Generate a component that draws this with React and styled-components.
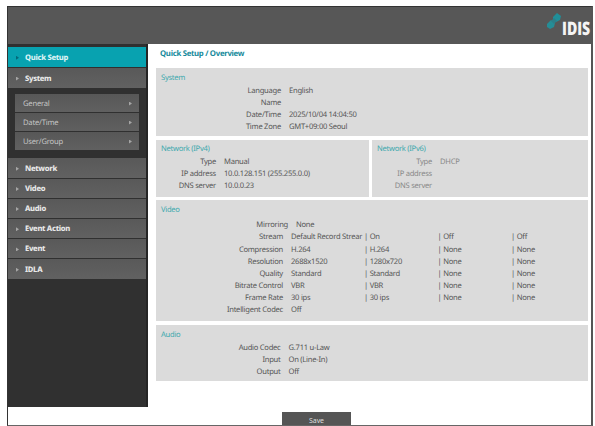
import styled, { createGlobalStyle } from "styled-components";

const menuBefore = [
  { name: "Quick Setup", active: true },
  { name: "System" },
];
const subMenu = ["General", "Date/Time", "User/Group"];
const menuAfter = ["Network", "Video", "Audio", "Event Action", "Event", "IDLA"];

const systemRows = [
  ["Language", "English"],
  ["Name", ""],
  ["Date/Time", "2025/10/04 14:04:50"],
  ["Time Zone", "GMT+09:00 Seoul"],
];
const ipv4Rows = [
  ["Type", "Manual"],
  ["IP address", "10.0.128.151 (255.255.0.0)"],
  ["DNS server", "10.0.0.23"],
];
const ipv6Rows = [
  ["Type", "DHCP"],
  ["IP address", ""],
  ["DNS server", ""],
];
const videoRows = [
  ["Stream", "Default Record Strear", "On", "Off", "Off"],
  ["Compression", "H.264", "H.264", "None", "None"],
  ["Resolution", "2688x1520", "1280x720", "None", "None"],
  ["Quality", "Standard", "Standard", "None", "None"],
  ["Bitrate Control", "VBR", "VBR", "None", "None"],
  ["Frame Rate", "30 ips", "30 ips", "None", "None"],
  ["Intelligent Codec", "Off"],
];
const audioRows = [
  ["Audio Codec", "G.711 u-Law"],
  ["Input", "On (Line-In)"],
  ["Output", "Off"],
];

function InfoRows({ rows, labelWidth, faded }) {
  return rows.map(([label, value]) => (
    <Row key={label} $labelWidth={labelWidth} $faded={faded}>
      <Label>{label}</Label>
      <span>{value}</span>
    </Row>
  ));
}

export default function App() {
  return (
    <>
      <GlobalStyle />
      <Frame>
        <Header>
          <Logo>
            <svg width="16" height="19" viewBox="0 0 16 19">
              <path d="M1 12 L5 8 L9 11 L8 15 L4 17 L1 15Z" fill="#258d96" />
              <path d="M7 5 L11 1 L15 4 L14 8 L10 10 L7 8Z" fill="#208f99" />
              <path d="M5 9 L8 6 L11 9 L8 12Z" fill="#2c7f89" />
            </svg>
            <LogoText>IDIS</LogoText>
          </Logo>
        </Header>
        <Body>
          <Sidebar>
            {menuBefore.map(({ name, active }) => (
              <MenuItem key={name} $active={active} $tall>
                <Arrow $active={active} />
                {name}
              </MenuItem>
            ))}
            <SubMenu>
              {subMenu.map((name) => (
                <SubItem key={name}>
                  {name}
                  <Arrow />
                </SubItem>
              ))}
            </SubMenu>
            {menuAfter.map((name) => (
              <MenuItem key={name}>
                <Arrow />
                {name}
              </MenuItem>
            ))}
          </Sidebar>
          <Content>
            <Breadcrumb>Quick Setup / Overview</Breadcrumb>
            <Panel $height={68}>
              <PanelTitle $top={1}>System</PanelTitle>
              <InfoRows rows={systemRows} labelWidth={125} />
            </Panel>
            <Columns>
              <Panel $height={57}>
                <PanelTitle $top={0.6}>Network (IPv4)</PanelTitle>
                <InfoRows rows={ipv4Rows} labelWidth={60} />
              </Panel>
              <Panel $height={57}>
                <PanelTitle $top={0.6}>Network (IPv6)</PanelTitle>
                <InfoRows rows={ipv6Rows} labelWidth={60} faded />
              </Panel>
            </Columns>
            <Panel $height={120.5}>
              <PanelTitle $top={0.6} $gap={2.4}>
                Video
              </PanelTitle>
              <InfoRows rows={[["Mirroring", "None"]]} labelWidth={132} />
              {videoRows.map(([label, first, ...others]) => (
                <VideoRow key={label}>
                  <Label>{label}</Label>
                  <span>{first}</span>
                  {others.map((value, index) => (
                    <StreamCell key={index}>{value}</StreamCell>
                  ))}
                </VideoRow>
              ))}
            </Panel>
            <Panel $height={56}>
              <PanelTitle $top={1}>Audio</PanelTitle>
              <InfoRows rows={audioRows} labelWidth={124.5} />
            </Panel>
          </Content>
        </Body>
        <Footer>
          <SaveButton>Save</SaveButton>
        </Footer>
      </Frame>
    </>
  );
}

const GlobalStyle = createGlobalStyle`
  * {
    box-sizing: border-box;
  }
  body {
    margin: 0;
    background-color: #ffffff;
    overflow: hidden;
    font-family: "Noto Sans", sans-serif;
    font-size: 7.6px;
    text-rendering: geometricPrecision;
  }
`;

const Frame = styled.div`
  width: 586px;
  height: 420px;
  margin: 6px 0 0 7px;
  border: 1px solid #333333;
  border-right: 2px solid #555555;
  border-bottom-color: #666666;
`;

const Header = styled.div`
  display: flex;
  justify-content: flex-end;
  height: 37px;
  background-color: #575757;
`;

const Logo = styled.div`
  display: flex;
  align-items: flex-start;
  padding-top: 5px;
`;

const LogoText = styled.div`
  width: 29px;
  margin-top: 7px;
  color: #f4f4f4;
  font-family: "Open Sans", sans-serif;
  font-size: 18.5px;
  font-weight: 800;
  line-height: 20px;
  transform: scaleX(0.76);
  transform-origin: left;
  white-space: nowrap;
`;

const Body = styled.div`
  display: flex;
  height: 363px;
`;

const Sidebar = styled.div`
  width: 140px;
  padding-top: 3px;
  background-color: #303030;
  border-right: 2px solid #252525;
`;

const MenuItem = styled.div`
  display: flex;
  align-items: center;
  gap: 6px;
  height: ${({ $tall }) => ($tall ? 19.9 : 19.2)}px;
  margin-bottom: 1px;
  padding: 1.5px 0 0 8px;
  color: ${({ $active }) => ($active ? "#d9f3f5" : "#e8e8e8")};
  background: ${({ $active }) =>
    $active ? "#08a2b0" : "linear-gradient(#595959, #616161)"};
  font-weight: 800;
  letter-spacing: -0.3px;
`;

const Arrow = styled.span`
  width: 3px;
  height: 4px;
  background-color: ${({ $active }) => ($active ? "#05697a" : "#a5a5a5")};
  clip-path: polygon(0 0, 100% 50%, 0 100%);
`;

const SubMenu = styled.div`
  display: flex;
  flex-direction: column;
  gap: 1px;
  height: 69.6px;
  padding: 5px 7px 0 7px;
`;

const SubItem = styled.div`
  display: flex;
  align-items: center;
  justify-content: space-between;
  height: 18px;
  padding: 1.5px 7px 0 8px;
  color: #c6c6c6;
  background: linear-gradient(#575757, #606060);
  letter-spacing: -0.2px;
`;

const Content = styled.div`
  display: flex;
  flex: 1;
  flex-direction: column;
  gap: 3.7px;
  padding: 0 3px 0 8px;
`;

const Breadcrumb = styled.div`
  height: 20.3px;
  padding-left: 4px;
  color: #168a9b;
  font-size: 7.8px;
  font-weight: 700;
  letter-spacing: -0.3px;
  line-height: 20px;
`;

const Panel = styled.div`
  height: ${({ $height }) => $height}px;
  padding-top: 3px;
  background-color: #dbdbdb;
`;

const Columns = styled.div`
  display: grid;
  grid-template-columns: 213px 1fr;
  gap: 3px;
`;

const PanelTitle = styled.div`
  height: 13px;
  margin-top: ${({ $top }) => $top || 0}px;
  margin-bottom: ${({ $gap }) => $gap || 0}px;
  padding-left: 5px;
  color: #3da9ae;
  letter-spacing: -0.28px;
  line-height: 12px;
`;

const Row = styled.div`
  display: grid;
  grid-template-columns: ${({ $labelWidth }) => $labelWidth}px 1fr;
  column-gap: 8px;
  height: 12.1px;
  color: ${({ $faded }) => ($faded ? "#888888" : "#555555")};
  letter-spacing: -0.26px;
  line-height: 12px;
  white-space: nowrap;
`;

const VideoRow = styled(Row)`
  grid-template-columns: 127px 65px 65.5px 65.5px 1fr;
  color: #555555;
`;

const Label = styled.span`
  text-align: right;
`;

const StreamCell = styled.span`
  &::before {
    content: "| ";
  }
`;

const Footer = styled.div`
  display: flex;
  height: 18px;
  padding: 5px 0 0 274px;
`;

const SaveButton = styled.button`
  width: 69px;
  height: 13px;
  padding: 4px 0 0;
  color: #dddddd;
  background-color: #555555;
  border: none;
  font-family: inherit;
  font-size: 7px;
  letter-spacing: -0.1px;
  line-height: 9px;
`;
